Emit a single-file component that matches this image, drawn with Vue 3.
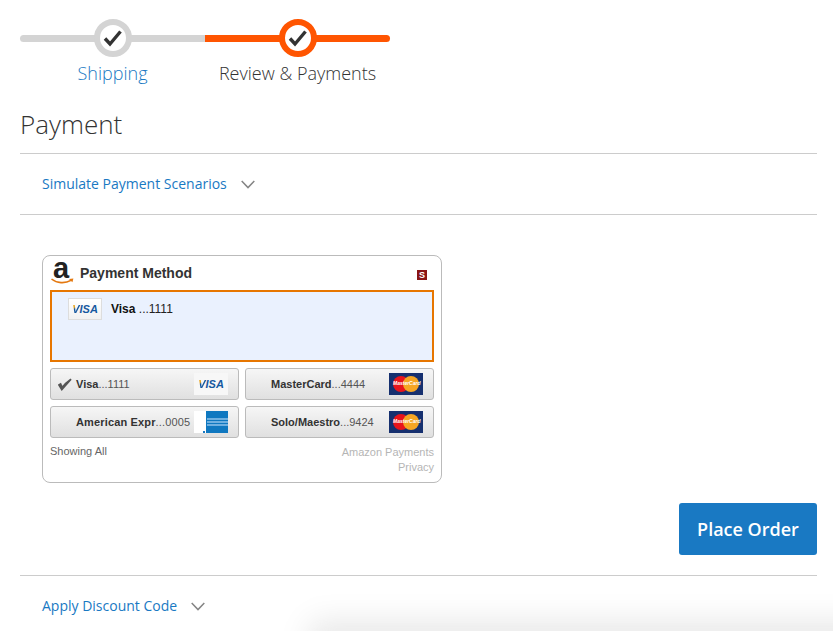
<template>
  <div class="page">
    <div class="progress">
      <div v-for="step in steps" :key="step.label" :class="['step', step.state]">
        <div class="track">
          <div class="circle">
            <svg width="20" height="18" viewBox="0 0 20 18"><path d="M2 9.5l5 5.5L17.5 2.5" fill="none" stroke="#333" stroke-width="3.4" /></svg>
          </div>
        </div>
        <div class="step-label">{{ step.label }}</div>
      </div>
    </div>

    <h1 class="title">Payment</h1>

    <div class="collapsible scenarios">
      <span class="link">Simulate Payment Scenarios</span>
      <svg class="chevron" width="14" height="9" viewBox="0 0 14 9"><path d="M0.7 1l6.3 6.6L13.3 1" fill="none" stroke="#858585" stroke-width="1.5" /></svg>
    </div>

    <div class="widget-area">
      <div class="widget">
        <div class="widget-head">
          <div class="logo">
            <span class="logo-a">a</span>
            <svg class="smile" width="23" height="7" viewBox="0 0 23 7"><path d="M0.5 1C6 5.4 14 5.8 20 2.4" fill="none" stroke="#e47911" stroke-width="1.6" /><path d="M18 1l4.4-.6-1 3.8z" fill="#e47911" /></svg>
          </div>
          <span class="widget-title">Payment Method</span>
          <span class="sandbox">S</span>
        </div>

        <div class="selected">
          <span class="visa-card"><span class="visa-text"><span class="visa-v">V</span>ISA</span></span>
          <span class="selected-text"><b>Visa</b> ...1111</span>
        </div>

        <div class="cards">
          <div v-for="card in cards" :key="card.name" class="card-btn">
            <svg v-if="card.checked" class="tick" width="14" height="13" viewBox="0 0 14 13"><path d="M1 7l2.8 4.6L13 1.2C9 4 6 7 4.2 9.4L2.6 6z" fill="#555" stroke="#555" stroke-width="1.7" /></svg>
            <span :class="['card-name', card.type]"><b>{{ card.name }}</b>...{{ card.last }}</span>
            <span v-if="card.type === 'visa'" class="visa-card small"><span class="visa-text"><span class="visa-v">V</span>ISA</span></span>
            <span v-else-if="card.type === 'mc'" class="mc-card">
              <i class="red"></i><i class="yellow"></i>
              <span class="mc-text">MasterCard</span>
            </span>
            <span v-else class="amex-card">
              <i class="amex-dot"></i>
              <span class="amex-blue"><i></i><i></i><i></i></span>
            </span>
          </div>
        </div>

        <div class="widget-foot">
          <span class="showing">Showing All</span>
          <div class="foot-links">
            <div>Amazon Payments</div>
            <div>Privacy</div>
          </div>
        </div>
      </div>
    </div>

    <div class="actions">
      <button class="place-order">Place Order</button>
    </div>

    <div class="collapsible discount">
      <span class="link">Apply Discount Code</span>
      <svg class="chevron" width="14" height="9" viewBox="0 0 14 9"><path d="M0.7 1l6.3 6.6L13.3 1" fill="none" stroke="#858585" stroke-width="1.5" /></svg>
    </div>

    <div class="bottom-shadow"></div>
  </div>
</template>

<script setup>
const steps = [
  { label: 'Shipping', state: 'done' },
  { label: 'Review & Payments', state: 'active' },
];

const cards = [
  { name: 'Visa', last: '1111', type: 'visa', checked: true },
  { name: 'MasterCard', last: '4444', type: 'mc' },
  { name: 'American Expr', last: '0005', type: 'amex' },
  { name: 'Solo/Maestro', last: '9424', type: 'mc' },
];
</script>

<style>
html, body {
  background: #fff;
  overflow: hidden;
}
</style>

<style scoped>
.page {
  position: relative;
  width: 833px;
  height: 631px;
  box-sizing: border-box;
  padding: 16px 16px 0 20px;
  overflow: hidden;
  font-family: "Open Sans", sans-serif;
  color: #333;
}

.progress {
  display: flex;
  width: 370px;
}

.step {
  width: 185px;
  text-align: center;
}

.track {
  position: relative;
  height: 7px;
  margin-top: 19px;
  background: #d4d4d4;
}

.step.done .track {
  border-radius: 4px 0 0 4px;
}

.step.active .track {
  background: #ff5501;
  border-radius: 0 4px 4px 0;
}

.circle {
  position: absolute;
  left: 74px;
  top: -16px;
  display: flex;
  align-items: center;
  justify-content: center;
  width: 38px;
  height: 38px;
  box-sizing: border-box;
  border: 6px solid #d4d4d4;
  border-radius: 50%;
  background: #fff;
}

.active .circle {
  border-color: #ff5501;
}

.step-label {
  margin-top: 19px;
  font-size: 18px;
  font-weight: 300;
  line-height: 24px;
  color: #333;
}

.done .step-label {
  color: #1979c3;
}

.title {
  margin: 22px 0 0;
  padding-bottom: 12px;
  border-bottom: 1px solid #ccc;
  font-size: 26px;
  font-weight: 300;
  line-height: 34px;
  color: #333;
}

.collapsible {
  display: flex;
  align-items: center;
  gap: 14px;
  padding-left: 22px;
  font-size: 14px;
  color: #1979c3;
}

.link {
  margin-bottom: 2px;
}

.scenarios {
  height: 60px;
  border-bottom: 1px solid #ccc;
}

.discount {
  height: 60px;
  border-top: 1px solid #ccc;
}

.widget-area {
  padding: 40px 0 0 22px;
}

.widget {
  width: 400px;
  height: 228px;
  box-sizing: border-box;
  padding: 0 7px;
  border: 1px solid #bbb;
  border-radius: 8px;
  background: #fff;
  font-family: "Liberation Sans", Arial, sans-serif;
}

.widget-head {
  display: flex;
  align-items: center;
  height: 34px;
}

.logo {
  position: relative;
  width: 30px;
  height: 28px;
}

.logo-a {
  position: absolute;
  left: 3px;
  top: -5px;
  font-size: 29px;
  font-weight: 700;
  line-height: 28px;
  color: #222;
}

.smile {
  position: absolute;
  left: 1px;
  top: 19px;
}

.widget-title {
  font-size: 14px;
  font-weight: 700;
  color: #333;
}

.sandbox {
  display: flex;
  align-items: center;
  justify-content: center;
  width: 10px;
  height: 10px;
  margin: 3px 7px 0 auto;
  background: #8a1414;
  font-size: 9px;
  font-weight: 700;
  color: #fff;
}

.selected {
  display: flex;
  align-items: flex-start;
  gap: 9px;
  height: 72px;
  box-sizing: border-box;
  padding: 6px 16px;
  border: 2px solid #e77600;
  background: #eaf1fe;
}

.selected-text {
  margin-top: 4px;
  font-size: 12px;
  color: #222;
}

.selected-text b {
  color: #111;
}

.visa-card {
  display: flex;
  align-items: center;
  justify-content: center;
  width: 34px;
  height: 22px;
  box-sizing: border-box;
  border: 1px solid #ddd;
  background: linear-gradient(#fff, #f1f1f1);
}

.visa-card.small {
  border: 0;
  background: #f7f7f7;
}

.visa-text {
  font-size: 11px;
  font-style: italic;
  font-weight: 700;
  color: #16589f;
}

.visa-v {
  margin: 0 -2px;
  padding: 0 2px;
  background: linear-gradient(135deg, #e8a41d 36%, #16589f 44%);
  -webkit-background-clip: text;
  background-clip: text;
  color: transparent;
}

.cards {
  display: grid;
  grid-template-columns: 189px 189px;
  gap: 6px;
  margin-top: 6px;
}

.card-btn {
  position: relative;
  display: flex;
  align-items: center;
  justify-content: space-between;
  height: 32px;
  box-sizing: border-box;
  padding: 0 10px 0 25px;
  border: 1px solid #bbb;
  border-radius: 3px;
  background: linear-gradient(#f6f6f6, #e0e0e0);
  font-size: 11px;
  color: #555;
}

.card-name b {
  color: #333;
}

.card-name.amex {
  letter-spacing: 0.15px;
}

.tick {
  position: absolute;
  left: 7px;
  top: 9px;
}

.mc-card {
  position: relative;
  display: block;
  width: 34px;
  height: 22px;
  background: #16306f;
}

.mc-card i {
  position: absolute;
  top: 3px;
  width: 16px;
  height: 16px;
  border-radius: 50%;
}

.mc-card .red {
  left: 4px;
  background: #e8141c;
}

.mc-card .yellow {
  left: 14px;
  background: #f6a623;
}

.mc-text {
  position: absolute;
  left: 4px;
  top: 7px;
  font-size: 5px;
  font-style: italic;
  font-weight: 700;
  line-height: 7px;
  color: #fff;
}

.amex-card {
  position: relative;
  display: block;
  width: 34px;
  height: 22px;
  background: #fff;
}

.amex-dot {
  position: absolute;
  left: 9px;
  bottom: 0;
  width: 2px;
  height: 2px;
  background: #1979c3;
}

.amex-blue {
  position: absolute;
  right: 0;
  top: 0;
  display: flex;
  flex-direction: column;
  justify-content: center;
  gap: 1px;
  width: 22px;
  height: 22px;
  background: #0f78c0;
}

.amex-blue i {
  display: block;
  height: 2px;
  margin-left: 1px;
  background: #6fb0e0;
}

.widget-foot {
  display: flex;
  justify-content: space-between;
  margin-top: 6px;
  font-size: 11px;
  line-height: 15px;
}

.showing {
  color: #666;
}

.foot-links {
  margin-top: 1px;
  text-align: right;
  color: #b5b5b5;
}

.actions {
  display: flex;
  justify-content: flex-end;
  padding: 20px 0;
}

.place-order {
  width: 138px;
  height: 52px;
  border: 0;
  border-radius: 3px;
  background: #1979c3;
  font-family: "Open Sans", sans-serif;
  font-size: 18px;
  font-weight: 600;
  color: #fff;
}

.bottom-shadow {
  position: absolute;
  left: 322px;
  right: -60px;
  top: 634px;
  height: 60px;
  background: #eee;
  box-shadow: 0 0 30px 12px rgba(0, 0, 0, 0.1);
  filter: blur(6px);
}
</style>
